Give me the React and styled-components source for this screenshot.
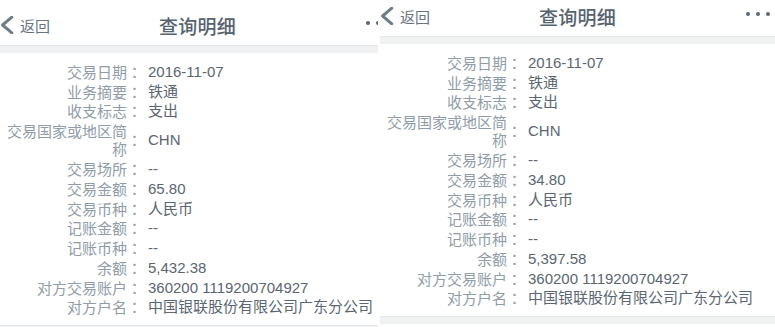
import React from "react";
import styled, { createGlobalStyle } from "styled-components";

const Global = createGlobalStyle`
  html, body { margin: 0; padding: 0; background: #ffffff; }
  body { font-family: "Liberation Sans", "Noto Sans CJK SC", sans-serif; }
`;

const Page = styled.div`
  display: flex;
  width: 775px;
  height: 327px;
  overflow: hidden;
  background: #ffffff;
`;

const Frame = styled.div`
  flex: none;
  width: ${(p) => p.$width}px;
  height: 327px;
  overflow: hidden;
  padding-left: ${(p) => p.$inset || 0}px;
  box-sizing: border-box;
`;

const Phone = styled.div`
  width: 395px;
  margin-top: ${(p) => p.$shift || 0}px;
  background: #ffffff;
`;

const Header = styled.div`
  height: 40px;
  padding-top: 5px;
  display: grid;
  grid-template-columns: 1fr auto 1fr;
  align-items: center;
`;

const Back = styled.div`
  display: flex;
  align-items: center;
  gap: 6px;
  color: #687482;
  font-size: 15px;
  font-family: "Noto Sans CJK SC", sans-serif;
`;

const Title = styled.div`
  font-family: "Noto Sans CJK SC", sans-serif;
  font-size: 19px;
  font-weight: 500;
  color: #56626e;
  letter-spacing: 0.3px;
`;

const More = styled.div`
  display: flex;
  justify-content: flex-end;
  gap: 6px;
  padding-right: 5px;
  margin-top: -4px;
`;

const Dot = styled.span`
  width: 4px;
  height: 4px;
  border-radius: 50%;
  background: #5b6773;
`;

const Band = styled.div`
  height: 7px;
  background: #eef0f2;
  border-top: 1px solid #e6e9ec;
`;

const List = styled.div`
  padding: 9px 0 8px;
`;

const Row = styled.div`
  display: flex;
  align-items: center;
  padding: 0.9px 0;
  font-size: 15px;
  line-height: 18px;
`;

const Label = styled.div`
  flex: none;
  width: 121px;
  margin-left: 6px;
  text-align: right;
  color: #909ca8;
  font-family: "Noto Sans CJK SC", sans-serif;
`;

const Colon = styled.span`
  flex: none;
  width: 15px;
  text-align: center;
  color: #909ca8;
  font-family: "Noto Sans CJK TC", sans-serif;
`;

const Value = styled.div`
  margin-left: 6px;
  color: #5a6671;
  font-family: "Liberation Sans", "Noto Sans CJK SC", sans-serif;
  white-space: nowrap;
`;

const Chevron = () => (
  <svg width="14" height="18" viewBox="0 0 14 18" aria-hidden="true">
    <path d="M11.8 1.2 L2.6 9 L11.8 16.8" fill="none" stroke="#6f7d8a" strokeWidth="3" strokeLinecap="round" strokeLinejoin="round" />
  </svg>
);

const detail = (amount, balance) => [
  ["交易日期", "2016-11-07"],
  ["业务摘要", "铁通"],
  ["收支标志", "支出"],
  ["交易国家或地区简称", "CHN"],
  ["交易场所", "--"],
  ["交易金额", amount],
  ["交易币种", "人民币"],
  ["记账金额", "--"],
  ["记账币种", "--"],
  ["余额", balance],
  ["对方交易账户", "360200 1119200704927"],
  ["对方户名", "中国银联股份有限公司广东分公司"],
];

const Screen = ({ rows, shift }) => (
  <Phone $shift={shift}>
    <Header>
      <Back>
        <Chevron />
        <span>返回</span>
      </Back>
      <Title>查询明细</Title>
      <More>
        <Dot />
        <Dot />
        <Dot />
      </More>
    </Header>
    <Band />
    <List>
      {rows.map(([k, v]) => (
        <Row key={k}>
          <Label>{k}</Label>
          <Colon>：</Colon>
          <Value>{v}</Value>
        </Row>
      ))}
    </List>
    <Band />
  </Phone>
);

export default function App() {
  return (
    <Page>
      <Global />
      <Frame $width={378}>
        <Screen rows={detail("65.80", "5,432.38")} shift={0} />
      </Frame>
      <Frame $width={397} $inset={2}>
        <Screen rows={detail("34.80", "5,397.58")} shift={-9} />
      </Frame>
    </Page>
  );
}
